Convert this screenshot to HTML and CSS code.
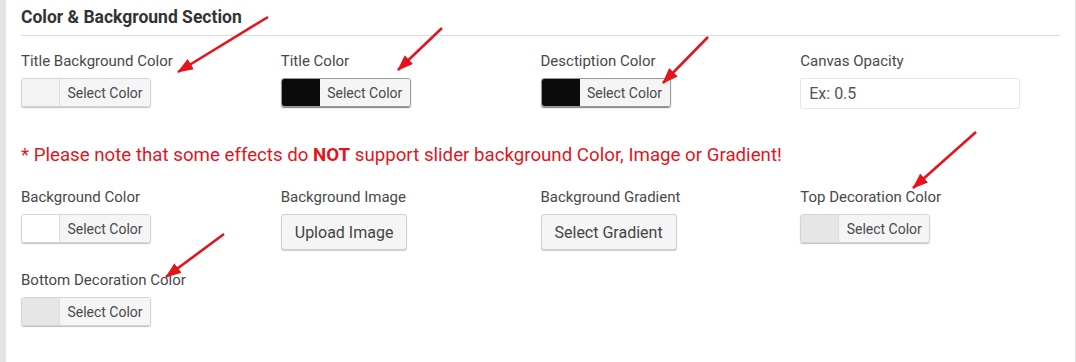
FILE: index.html
```html
<!DOCTYPE html>
<html lang="en">
<head>
    <meta charset="UTF-8">
    <meta name="viewport" content="width=device-width, initial-scale=1.0">
    <title>Color &amp; Background Section</title>
<link rel="stylesheet" href="styles.css">
</head>
<body>
    <div class="panel">
        <h3 class="section-title">Color &amp; Background Section</h3>

        <div class="fields">
            <div class="field">
                <label>Title Background Color</label>
                <div class="color-picker">
                    <span class="swatch swatch-light"></span>
                    <span class="picker-text">Select Color</span>
                </div>
            </div>
            <div class="field">
                <label>Title Color</label>
                <div class="color-picker dark">
                    <span class="swatch swatch-black"></span>
                    <span class="picker-text">Select Color</span>
                </div>
            </div>
            <div class="field">
                <label>Desctiption Color</label>
                <div class="color-picker dark">
                    <span class="swatch swatch-black"></span>
                    <span class="picker-text">Select Color</span>
                </div>
            </div>
            <div class="field">
                <label for="opacity">Canvas Opacity</label>
                <input type="text" id="opacity" class="text-input" placeholder="Ex: 0.5">
            </div>
        </div>

        <p class="note">* Please note that some effects do <b>NOT</b> support slider background Color, Image or Gradient!</p>

        <div class="fields">
            <div class="field">
                <label>Background Color</label>
                <div class="color-picker">
                    <span class="swatch swatch-white"></span>
                    <span class="picker-text">Select Color</span>
                </div>
            </div>
            <div class="field">
                <label>Background Image</label>
                <button type="button" class="btn">Upload Image</button>
            </div>
            <div class="field">
                <label>Background Gradient</label>
                <button type="button" class="btn">Select Gradient</button>
            </div>
            <div class="field">
                <label>Top Decoration Color</label>
                <div class="color-picker">
                    <span class="swatch swatch-grey"></span>
                    <span class="picker-text">Select Color</span>
                </div>
            </div>
            <div class="field">
                <label>Bottom Decoration Color</label>
                <div class="color-picker">
                    <span class="swatch swatch-grey"></span>
                    <span class="picker-text">Select Color</span>
                </div>
            </div>
        </div>
    </div>

    <!-- red annotation arrows drawn over the form -->
    <svg class="arrows" width="1076" height="362" viewBox="0 0 1076 362">
        <defs>
            <marker id="head" markerUnits="userSpaceOnUse" markerWidth="16" markerHeight="12" refX="15" refY="6" orient="auto">
                <path d="M0 0 L16 6 L0 12 Z" fill="#e3141b"/>
            </marker>
        </defs>
        <g stroke="#e3141b" stroke-width="2.6" marker-end="url(#head)">
            <line x1="268" y1="17" x2="178" y2="72"/>
            <line x1="442" y1="28" x2="398" y2="70"/>
            <line x1="708" y1="37" x2="663" y2="83"/>
            <line x1="976" y1="132" x2="913" y2="188"/>
            <line x1="224" y1="234" x2="166" y2="277"/>
        </g>
    </svg>
</body>
</html>
```

FILE: styles.css
```css
body {
    margin: 0;
    font-family: Roboto, "Liberation Sans", Arial, sans-serif;
    background-color: #ffffff;
    color: #444;
}
.panel {
    position: relative;
    box-sizing: border-box;
    width: 1076px;
    height: 362px;
    padding: 5px 15px 0 15px;
    border-left: 6px solid #e3e3e3;
    border-right: 1px solid #dddddd;
}
.section-title {
    margin: 0;
    padding-bottom: 6px;
    font-size: 17.5px;
    line-height: 24px;
    font-weight: bold;
    color: #333;
    border-bottom: 1px solid #dddddd;
}
.fields {
    display: grid;
    grid-template-columns: repeat(4, 1fr);
    row-gap: 21px;
    margin-top: 16px;
}
.field label {
    display: block;
    font-size: 15px;
    line-height: 18px;
    color: #484848;
    margin-bottom: 8px;
}
.color-picker {
    display: flex;
    width: 130px;
    height: 29px;
    box-sizing: border-box;
    border: 1px solid #d4d4d4;
    border-radius: 3px;
    box-shadow: 0 1px 1px rgba(0, 0, 0, 0.25);
    overflow: hidden;
}
.color-picker.dark {
    border-color: #999;
    box-shadow: 0 1px 1px rgba(0, 0, 0, 0.5);
}
.swatch {
    width: 37px;
    border-right: 1px solid #dcdcdc;
}
.swatch-light { background-color: #f3f3f3; }
.swatch-white { background-color: #ffffff; }
.swatch-grey { background-color: #e6e6e6; }
.swatch-black { background-color: #0b0b0b; border-right-color: #0b0b0b; }
.picker-text {
    flex: 1;
    display: flex;
    align-items: center;
    justify-content: center;
    background-color: #f5f5f5;
    font-size: 14px;
    color: #4a4a4a;
}
.text-input {
    display: block;
    box-sizing: border-box;
    width: 220px;
    height: 31px;
    margin: 0;
    padding: 0 8px;
    border: 1px solid #e6e6e6;
    border-radius: 2px;
    font-family: inherit;
    font-size: 16px;
    color: #555;
}
.text-input::placeholder {
    color: #555;
}
.btn {
    display: block;
    height: 36px;
    margin: 0;
    padding: 0 13px;
    background-color: #f5f5f5;
    border: 1px solid #d0d0d0;
    border-radius: 3px;
    box-shadow: 0 1px 1px rgba(0, 0, 0, 0.2);
    font-family: inherit;
    font-size: 16px;
    color: #444;
    cursor: pointer;
}
.note {
    margin: 35px 0 0 0;
    font-size: 18.7px;
    line-height: 22px;
    color: #e3151c;
}
.note + .fields {
    margin-top: 22px;
}
.arrows {
    position: absolute;
    top: 0;
    left: 0;
    pointer-events: none;
}
```
